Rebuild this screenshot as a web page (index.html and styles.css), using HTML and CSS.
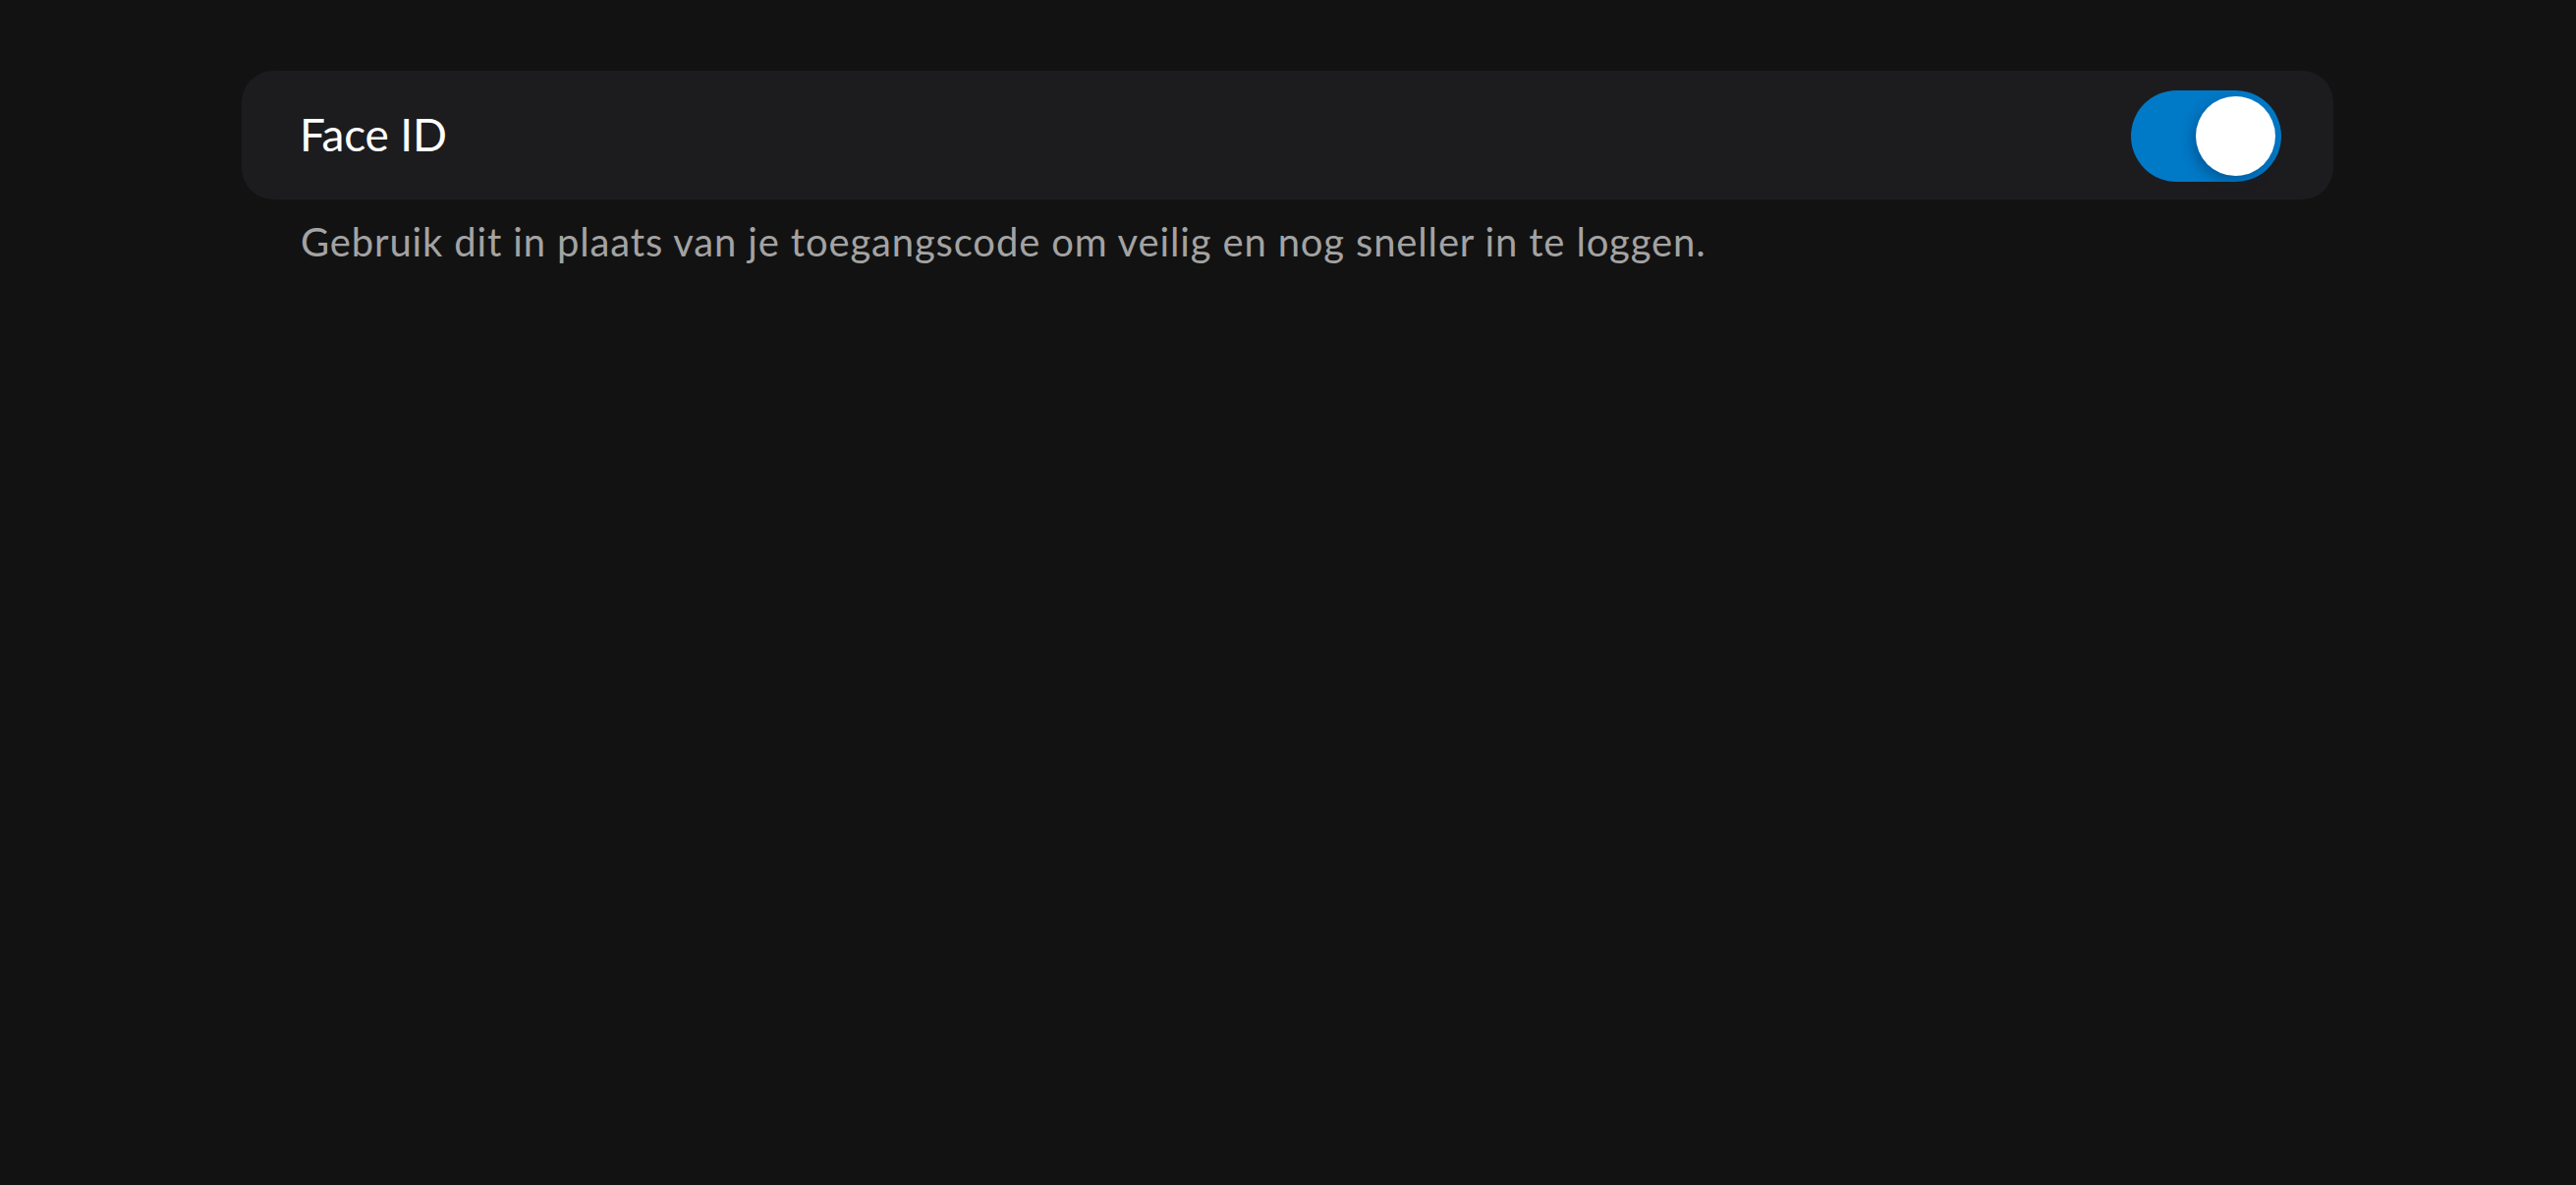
FILE: index.html
```html
<!DOCTYPE html>
<html lang="nl">
<head>
<meta charset="utf-8">
<title>Face ID</title>
<link rel="stylesheet" href="styles.css">
</head>
<body>
<main class="settings">
  <div class="card">
    <span class="label">Face ID</span>
    <div class="toggle" role="switch" aria-checked="true">
      <span class="knob"></span>
    </div>
  </div>
  <p class="hint">Gebruik dit in plaats van je toegangscode om veilig en nog sneller in te loggen.</p>
</main>
</body>
</html>
```
FILE: styles.css
```css
html, body {
  margin: 0;
  height: 100%;
  background: #121212;
}
body {
  font-family: Lato, "Open Sans", sans-serif;
}
.settings {
  padding: 72px 0 0 246px;
  width: 2129px;
}
.card {
  box-sizing: border-box;
  height: 131px;
  background: #1c1c1e;
  border-radius: 32px;
  display: flex;
  align-items: center;
  justify-content: space-between;
  padding: 0 53px 0 59px;
}
.label {
  color: #ffffff;
  font-size: 46px;
  line-height: 1;
  margin-bottom: 2px;
  letter-spacing: -0.2px;
}
.toggle {
  position: relative;
  width: 153px;
  height: 93px;
  border-radius: 47px;
  background: #0079c6;
  margin-top: 2px;
}
.knob {
  position: absolute;
  top: 6px;
  right: 6px;
  width: 81px;
  height: 81px;
  border-radius: 50%;
  background: #ffffff;
  box-shadow: -4px 5px 12px rgba(0, 40, 90, 0.35);
}
.hint {
  margin: 17px 0 0 60px;
  color: #a3a3a3;
  font-size: 40px;
  line-height: 1.3;
  letter-spacing: 0.85px;
}
```
